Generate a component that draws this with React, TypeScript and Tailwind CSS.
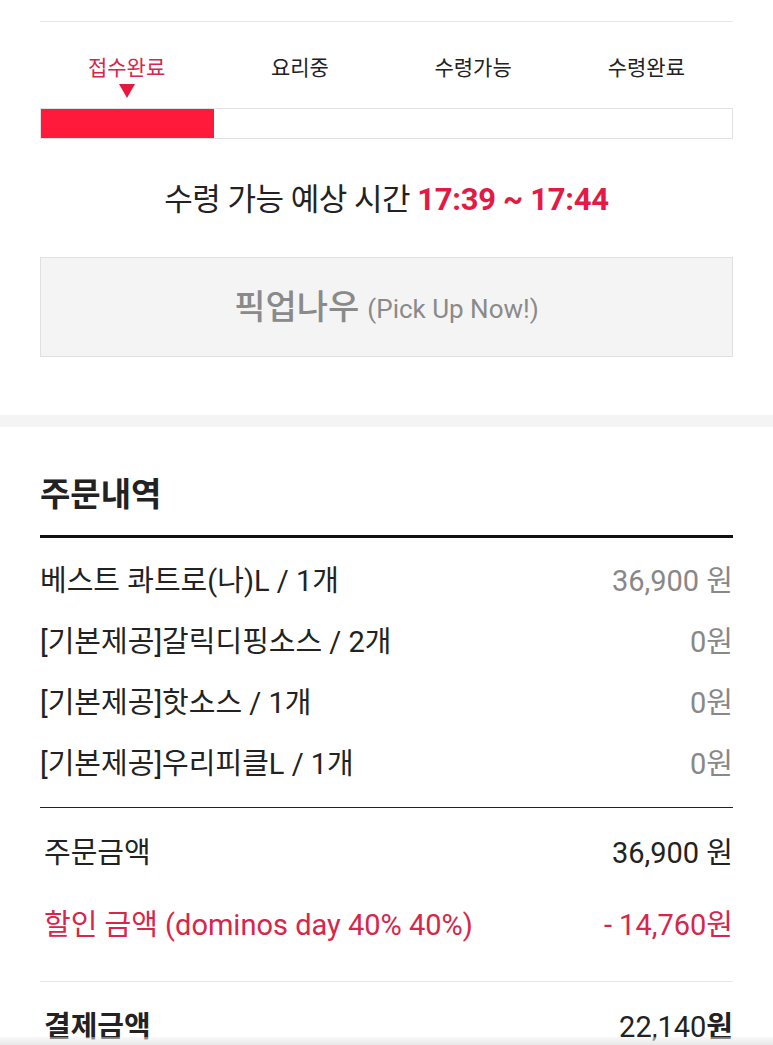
const steps = ['접수완료', '요리중', '수령가능', '수령완료'];

const items = [
  { name: '베스트 콰트로(나)L / 1개', price: '36,900 원' },
  { name: '[기본제공]갈릭디핑소스 / 2개', price: '0원' },
  { name: '[기본제공]핫소스 / 1개', price: '0원' },
  { name: '[기본제공]우리피클L / 1개', price: '0원' },
];

export default function App() {
  return (
    <div
      className="relative h-[1045px] overflow-hidden bg-white text-[#222]"
      style={{ fontFamily: 'Roboto, "Noto Sans CJK KR", sans-serif' }}
    >
      <div className="px-[40px]">
        <div className="h-[22px] border-b border-[#e6e6e6]" />

        {/* 주문 진행 단계 */}
        <div className="mt-[34px] grid grid-cols-4">
          {steps.map((s, i) => (
            <div key={s} className="flex flex-col items-center">
              <span
                className={`text-[21px] leading-[24px] ${
                  i === 0 ? 'text-[#d7264b]' : 'text-[#222]'
                }`}
              >
                {s}
              </span>
              <div className="mt-[4px] h-[14px]">
                {i === 0 && (
                  <svg width="16" height="14" viewBox="0 0 16 14">
                    <path d="M0 0 H16 L8 14 Z" fill="#e8173f" />
                  </svg>
                )}
              </div>
            </div>
          ))}
        </div>
        <div className="mt-[10px] h-[31px] border border-[#e2e2e2] bg-white">
          <div className="h-full w-1/4 bg-[#ff1a3c]" />
        </div>

        <div className="mt-[43px] text-center text-[31px] leading-[36px] tracking-[-0.5px]">
          수령 가능 예상 시간{' '}
          <span className="text-[31px] font-bold tracking-[-0.3px] text-[#e31a45]">17:39 ~ 17:44</span>
        </div>

        <div className="mt-[39px] flex h-[100px] items-center justify-center border border-[#e0e0e0] bg-[#f4f4f4] text-[#8a8a8a]">
          <span className="text-[34px] font-medium">픽업나우</span>
          <span className="ml-[8px] mt-[4px] text-[26px]">(Pick Up Now!)</span>
        </div>
      </div>

      <div className="mt-[58px] h-[12px] bg-[#f4f4f4]" />

      {/* 주문내역 */}
      <div className="px-[40px]">
        <h2 className="mt-[48px] text-[33px] font-bold leading-[40px]">주문내역</h2>
        <div className="mt-[20px] h-[3px] bg-[#111]" />

        <div className="mt-[13px]">
          {items.map((it) => (
            <div key={it.name} className="flex h-[61px] items-center justify-between text-[29px]">
              <span>{it.name}</span>
              <span className="text-[#888]">{it.price}</span>
            </div>
          ))}
        </div>

        <div className="mt-[12px] h-px bg-[#222]" />

        <div className="mt-[10px] pl-[4px]">
          <div className="flex h-[72px] items-center justify-between text-[29px]">
            <span>주문금액</span>
            <span>36,900 원</span>
          </div>
          <div className="flex h-[72px] items-center justify-between text-[29px] text-[#d7264b]">
            <span>할인 금액 (dominos day 40% 40%)</span>
            <span>- 14,760원</span>
          </div>
        </div>

        <div className="mt-[19px] h-px bg-[#e6e6e6]" />

        <div className="mt-[26px] flex h-[40px] items-center justify-between pl-[4px] text-[29px]">
          <span className="font-bold">결제금액</span>
          <span>
            22,140<span className="font-bold">원</span>
          </span>
        </div>
      </div>

      <div className="pointer-events-none absolute inset-x-0 bottom-0 h-[8px] bg-gradient-to-b from-[#f0f0f0]/40 to-[#e8e8e8]" />
    </div>
  );
}
